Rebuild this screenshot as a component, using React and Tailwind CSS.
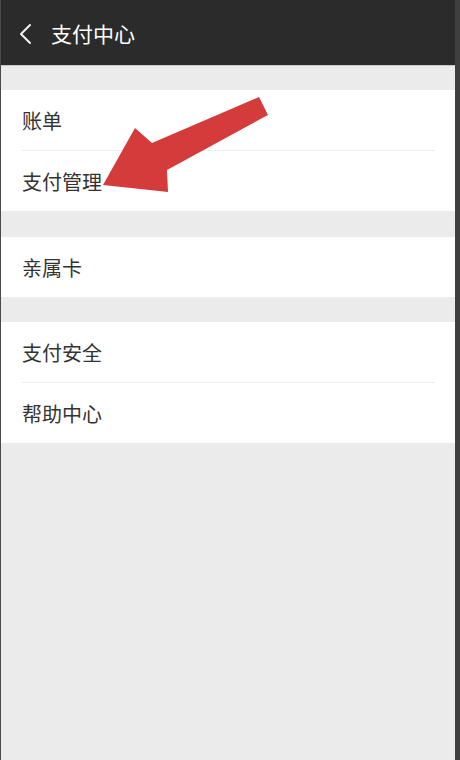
import React from 'react';

const font = { fontFamily: '"Noto Sans CJK SC", "Noto Sans", sans-serif' };

function Row({ label, divider }) {
  return (
    <>
      <div className="h-[60px] flex items-center pl-[21px] pt-[2px] text-[20px] text-[#333333]">{label}</div>
      {divider && <div className="ml-[21px] mr-[20px] h-px bg-[#ececec]" />}
    </>
  );
}

function Group({ items }) {
  return (
    <div className="bg-white flex flex-col">
      {items.map((label, i) => (
        <Row key={label} label={label} divider={i < items.length - 1} />
      ))}
    </div>
  );
}

export default function App() {
  return (
    <div className="relative w-[460px] h-[760px] flex bg-[#3f3f3f] overflow-hidden" style={font}>
      <div className="w-px bg-[#4a4a4a]" />
      <div className="flex-1 flex flex-col bg-[#ebebeb] mr-[5px]">
        <div className="h-[66px] bg-[#2b2b2b] flex items-center pt-[3px] border-b border-[#c9c9c9]">
          <svg width="14" height="22" viewBox="0 0 14 22" className="ml-[17px]">
            <path d="M12 2 L3 11 L12 20" fill="none" stroke="#f2f2f2" strokeWidth="2" strokeLinecap="round" strokeLinejoin="round" />
          </svg>
          <span className="ml-[19px] text-[21px] text-white">支付中心</span>
        </div>
        <div className="h-[24px]" />
        <Group items={['账单', '支付管理']} />
        <div className="h-[26px]" />
        <Group items={['亲属卡']} />
        <div className="h-[25px]" />
        <Group items={['支付安全', '帮助中心']} />
      </div>
      <svg className="absolute left-0 top-0" width="460" height="760" viewBox="0 0 460 760">
        <polygon
          points="103,185 135,128 152,143 259,97 268,115 167,170 168,192"
          fill="#d43c3c"
        />
      </svg>
    </div>
  );
}
